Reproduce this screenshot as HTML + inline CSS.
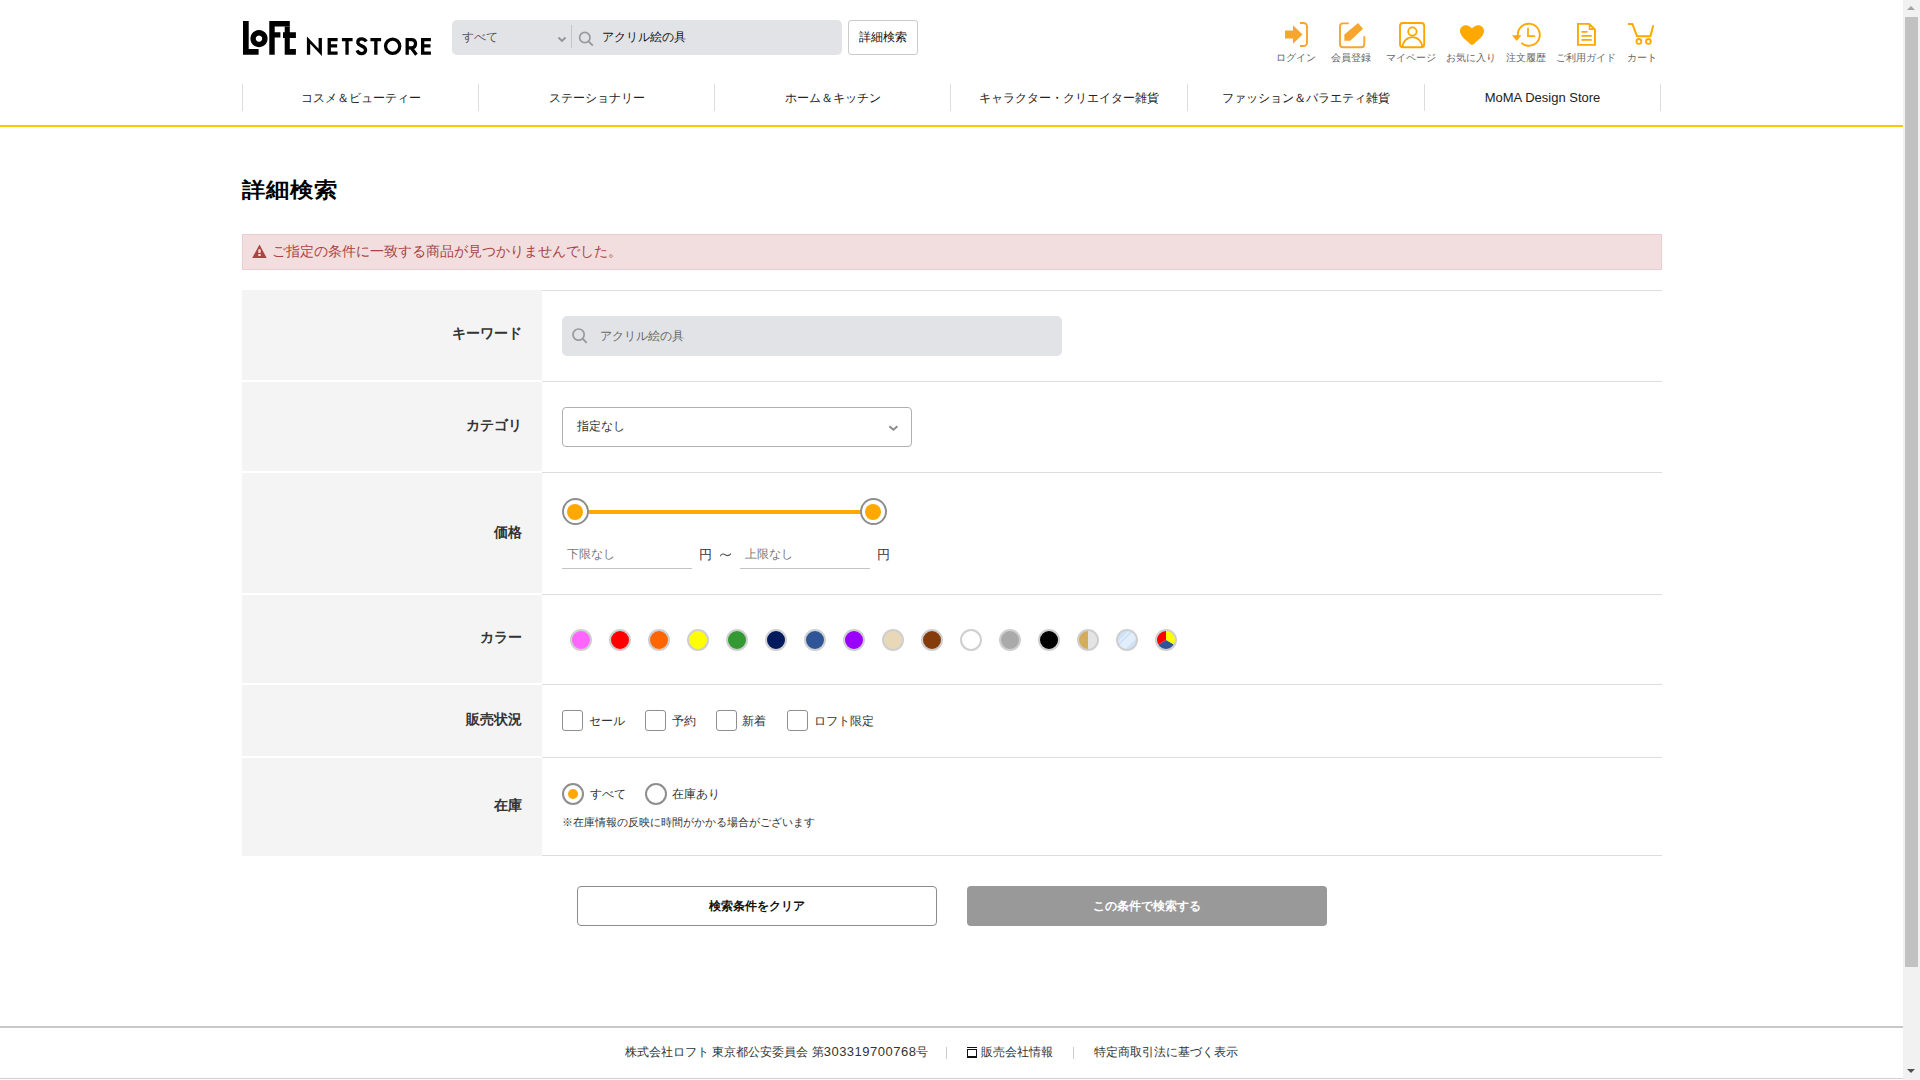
<!DOCTYPE html>
<html lang="ja"><head><meta charset="utf-8">
<style>
*{box-sizing:border-box;margin:0;padding:0}
html,body{width:1920px;height:1080px;overflow:hidden;background:#fff}
body{font-family:"Liberation Sans",sans-serif;color:#333;position:relative}
.a{position:absolute;white-space:nowrap}
.sb{position:absolute;left:1903px;top:0;width:17px;height:1080px;background:#f1f1f1}
.thumb{position:absolute;left:2px;top:17px;width:13px;height:950px;background:#c1c1c1}
.ua{position:absolute;left:4px;top:6px;width:0;height:0;border-left:4.5px solid transparent;border-right:4.5px solid transparent;border-bottom:4.5px solid #a3a3a3}
.da{position:absolute;left:4px;top:1069px;width:0;height:0;border-left:4.5px solid transparent;border-right:4.5px solid transparent;border-top:4.5px solid #505050}
.search{left:452px;top:20px;width:390px;height:35px;background:#e2e3e7;border-radius:5px}
.detail{left:848px;top:20px;width:70px;height:35px;border:1px solid #ccc;border-radius:3px;font-size:12px;color:#111;line-height:33px;text-align:center}
.ic{position:absolute;top:50.5px;font-size:10px;color:#666;text-align:center;width:70px}
.nav{left:242px;top:80px;width:1420px;height:36px}
.nav div{position:absolute;top:4px;height:27px;border-left:1px solid #ddd;font-size:12px;line-height:29px;text-align:center;color:#222}
.yl{left:0;top:125px;width:1903px;height:2px;background:#fdc800}
h1{position:absolute;left:242px;top:175px;font-size:23px;letter-spacing:1px;font-weight:bold;color:#000;line-height:32px;transform:scaleY(0.9);transform-origin:0 4px}
.alert{left:242px;top:234px;width:1420px;height:36px;background:#f2dede;border:1px solid #ebccd1;color:#a94442;font-size:14px;line-height:34px}
.th{position:absolute;left:242px;width:300px;background:#f4f4f4;font-size:14px;font-weight:bold;color:#333;text-align:right;padding-right:20px}
.tr{position:absolute;left:542px;width:1120px;border-top:1px solid #ddd}
.lbl{position:absolute;font-size:12px;color:#333}
.cb{position:absolute;width:21px;height:21px;border:1px solid #8f8f8f;border-radius:3px;background:#fff}
.col{position:absolute;top:629px;width:22px;height:22px;border-radius:50%;border:2px solid #cfcfcf}
</style></head><body>
<!-- scrollbar -->
<div class="sb"><div class="ua"></div><div class="thumb"></div><div class="da"></div></div>

<!-- header -->
<svg class="a" style="left:240px;top:18px" width="200" height="42" viewBox="240 18 200 42">
<g fill="#000">
<path d="M243 21.1h5.7v27.9h9.9v5.7h-15.6z"/>
<path d="M259 30a8.6 8.6 0 1 0 0.01 0zM259 35.4a3.2 3.2 0 1 1 -0.01 0z" fill-rule="evenodd"/>
<path d="M269.3 21.1h20.5v5.5h-15.1v5.7h5.7v5.2h-5.7v17.2h-5.4z"/>
<path d="M284.7 26.6h5.1v5.7h6.1v5.7h-6.1v11h6.1v5.7h-11.2v-16.7h-1.7v-5.7h1.7z"/>
</g>
<g fill="none" stroke="#000" stroke-width="3.3" stroke-linejoin="miter">
<path d="M337.6 39.65h-8.35v13.5h8.35M329.25 45.85h7.9"/>
<path d="M341.9 39.65h10.7M347.05 39.65v15.15"/>
<path d="M366.2 41.6C365.3 39.9 363.6 38.95 361.7 38.95 359.3 38.95 357.8 40.4 357.8 42.3 357.8 46.6 365.6 45.2 365.6 50 365.6 52.2 363.8 53.55 361.4 53.55 359.3 53.55 357.8 52.3 357.1 50.4"/>
<path d="M370.4 39.65h10.7M375.85 39.65v15.15"/>
<circle cx="392.65" cy="46.25" r="7.1"/>
<path d="M407.2 54.8V39.65h4.1c2.6 0 4.2 1.6 4.2 4.1 0 2.5-1.6 4.1-4.2 4.1h-4.1M411 47.6l5.4 7.2"/>
<path d="M430.9 39.65h-8.25v13.5h8.25M422.65 45.85h7.8"/>
</g>
<g fill="#000"><path d="M306.9 36.6L318.6 48.65V38H321.9V55.9L310.2 43.85V54.8H306.9z"/></g>
</svg>
<div class="a search"></div>
<div class="a" style="left:462px;top:29px;font-size:12px;color:#555;line-height:16px">すべて</div>
<svg class="a" style="left:556px;top:35px" width="12" height="8" viewBox="0 0 12 8"><path d="M2.5 2.5l3.5 3.5 3.5-3.5" fill="none" stroke="#939393" stroke-width="1.8"/></svg>
<div class="a" style="left:571px;top:25px;width:1px;height:23px;background:#c4c5c9"></div>
<svg class="a" style="left:577px;top:29.5px" width="18" height="18" viewBox="0 0 18 18"><circle cx="7.8" cy="7.5" r="5.2" fill="none" stroke="#9a9a9a" stroke-width="1.7"/><path d="M11.6 11.3l4.2 4.3" stroke="#9a9a9a" stroke-width="1.9"/></svg>
<div class="a" style="left:602px;top:29px;font-size:12px;color:#111;line-height:16px">アクリル絵の具</div>
<div class="a detail">詳細検索</div>
<svg class="a" style="left:1270px;top:15px" width="400" height="40" viewBox="1270 15 400 40">
<g fill="#f6a52d">
<path d="M1285 30.5h8v-5.3l9.5 9.3-9.5 9.3v-5.3h-8z"/>
</g>
<path d="M1300 23h3.5a3.5 3.5 0 0 1 3.5 3.5v16a3.5 3.5 0 0 1-3.5 3.5h-3.5" fill="none" stroke="#f6a52d" stroke-width="1.9"/>
<path d="M1348.8 23.4h-5.8a3 3 0 0 0-3 3v17.9a3 3 0 0 0 3 3h18.3a3 3 0 0 0 3-3v-8" fill="none" stroke="#f6a52d" stroke-width="1.9"/>
<path d="M1344.4 34.5l13.7-11.4 4.9 5.6-12.8 12h-5.8z" fill="#f6a52d"/>
<rect x="1400" y="23" width="24.2" height="24.2" rx="3" fill="none" stroke="#fca600" stroke-width="1.9"/>
<circle cx="1412.4" cy="31.5" r="4.2" fill="none" stroke="#fca600" stroke-width="1.8"/>
<path d="M1402.6 47a9.8 9.8 0 0 1 19.6 0" fill="none" stroke="#fca600" stroke-width="1.8"/>
<path d="M1472 44.8c-0.6 0-1.2-0.4-1.8-0.9C1466 40.4 1460 36 1460 31c0-3.3 2.6-5.8 5.8-5.8 2.6 0 4.6 1.4 6.2 3.4 1.6-2 3.6-3.4 6.2-3.4 3.2 0 5.8 2.5 5.8 5.8 0 5-6 9.4-10.2 12.9-0.6 0.5-1.2 0.9-1.8 0.9z" fill="#ffa800"/>
<path d="M1517.82 35.5A11 11 0 1 1 1521.9 43.3" fill="none" stroke="#ffa800" stroke-width="1.9" stroke-linecap="round"/>
<path d="M1512 35.2h9.4l-4.7 5.8z" fill="#ffa800"/>
<path d="M1528 28.4v7.8h6.4" fill="none" stroke="#ffa800" stroke-width="1.75" stroke-linecap="round"/>
<path d="M1577.95 23.85h11.2l5.8 5.6v15.4h-17z" fill="none" stroke="#ffa800" stroke-width="1.9"/>
<path d="M1589.6 23.85v5.3h5.35" fill="none" stroke="#ffa800" stroke-width="1.7"/>
<path d="M1582 31.8h5M1582 35.9h9.1M1582 39.9h9.1" stroke="#ffa800" stroke-width="1.65" stroke-linecap="round"/>
<path d="M1628 24h4.4l4.7 12.3h13.3l2.9-11" fill="none" stroke="#ffa800" stroke-width="2" stroke-linejoin="round"/>
<circle cx="1638.9" cy="41.4" r="2.4" fill="none" stroke="#ffa800" stroke-width="1.8"/>
<circle cx="1648.4" cy="41.4" r="2.4" fill="none" stroke="#ffa800" stroke-width="1.8"/>
</svg>
<div class="ic" style="left:1261px">ログイン</div>
<div class="ic" style="left:1316px">会員登録</div>
<div class="ic" style="left:1376px">マイページ</div>
<div class="ic" style="left:1436px">お気に入り</div>
<div class="ic" style="left:1491px">注文履歴</div>
<div class="ic" style="left:1551px">ご利用ガイド</div>
<div class="ic" style="left:1607px">カート</div>


<div class="a nav">
  <div style="left:0;width:237px">コスメ＆ビューティー</div>
  <div style="left:236px;width:237px">ステーショナリー</div>
  <div style="left:472px;width:237px">ホーム＆キッチン</div>
  <div style="left:708px;width:237px">キャラクター・クリエイター雑貨</div>
  <div style="left:945px;width:237px">ファッション＆バラエティ雑貨</div>
  <div style="left:1182px;width:237px;border-right:1px solid #ddd;font-size:13px;line-height:27px">MoMA Design Store</div>
</div>
<div class="a yl"></div>

<h1>詳細検索</h1>
<div class="a alert"></div>
<svg class="a" style="left:251px;top:244px" width="17" height="15" viewBox="0 0 17 15"><path d="M8.5 0.6L15.7 14H1.2z" fill="#a94442"/><rect x="7.3" y="5.3" width="2.4" height="3.6" fill="#f2dede"/><rect x="7.3" y="10" width="2.4" height="2" fill="#f2dede"/></svg>
<div class="a" style="left:272px;top:241.5px;font-size:14px;color:#a94442;line-height:18px">ご指定の条件に一致する商品が見つかりませんでした。</div>

<!-- table -->
<div class="th" style="top:290px;height:90px;line-height:86px">キーワード</div>
<div class="tr" style="top:290px;height:91px"></div>
<div class="th" style="top:382px;height:89px;line-height:87px">カテゴリ</div>
<div class="tr" style="top:381px;height:91px"></div>
<div class="th" style="top:473px;height:120px;line-height:118px">価格</div>
<div class="tr" style="top:472px;height:122px"></div>
<div class="th" style="top:595px;height:88px;line-height:85px">カラー</div>
<div class="tr" style="top:594px;height:90px"></div>
<div class="th" style="top:685px;height:71px;line-height:69px">販売状況</div>
<div class="tr" style="top:684px;height:73px"></div>
<div class="th" style="top:758px;height:98px;line-height:95px">在庫</div>
<div class="tr" style="top:757px;height:99px;border-bottom:1px solid #ddd"></div>


<!-- keyword -->
<div class="a" style="left:562px;top:316px;width:500px;height:40px;background:#e2e3e7;border-radius:5px"></div>
<svg class="a" style="left:570px;top:326px" width="20" height="20" viewBox="0 0 20 20"><circle cx="8.6" cy="8.6" r="5.6" fill="none" stroke="#999" stroke-width="1.7"/><path d="M12.6 12.6l4.1 4.2" stroke="#999" stroke-width="1.9"/></svg>
<div class="a" style="left:600px;top:328px;font-size:12px;color:#666;line-height:16px">アクリル絵の具</div>
<!-- category -->
<div class="a" style="left:562px;top:407px;width:350px;height:40px;border:1px solid #b0b0b0;border-radius:4px;background:#fff"></div>
<div class="a" style="left:577px;top:419px;font-size:12px;color:#333;line-height:15px">指定なし</div>
<svg class="a" style="left:887px;top:423px" width="12" height="10" viewBox="0 0 12 10"><path d="M2.4 3.2l4 3.6 4-3.6" fill="none" stroke="#8a8a8a" stroke-width="1.9"/></svg>
<!-- price -->
<div class="a" style="left:575px;top:510px;width:298px;height:3.5px;background:#ffa800"></div>
<div class="a" style="left:561.5px;top:498px;width:27px;height:27px;border-radius:50%;border:2px solid #8e8e8e;background:#fff"></div>
<div class="a" style="left:567px;top:503.5px;width:16px;height:16px;border-radius:50%;background:#ffa800"></div>
<div class="a" style="left:859.5px;top:498px;width:27px;height:27px;border-radius:50%;border:2px solid #8e8e8e;background:#fff"></div>
<div class="a" style="left:865px;top:503.5px;width:16px;height:16px;border-radius:50%;background:#ffa800"></div>
<div class="a" style="left:562px;top:568px;width:130px;height:1px;background:#c4c4c4"></div>
<div class="a" style="left:740px;top:568px;width:130px;height:1px;background:#c4c4c4"></div>
<div class="a" style="left:567px;top:546px;font-size:12px;color:#777;line-height:16px">下限なし</div>
<div class="a" style="left:745px;top:546px;font-size:12px;color:#777;line-height:16px">上限なし</div>
<div class="a" style="left:699px;top:547px;font-size:13px;color:#333;line-height:16px">円</div>
<svg class="a" style="left:719px;top:550.5px" width="14" height="8" viewBox="0 0 14 8"><path d="M1.2 5.2c1.5-2.4 3-2.8 5-1.4s3.6 1.3 5.8-1.2" fill="none" stroke="#555" stroke-width="1.05"/></svg>
<div class="a" style="left:877px;top:547px;font-size:13px;color:#333;line-height:16px">円</div>
<!-- colors -->
<div class="col" style="left:570px;background:#ff66ff"></div>
<div class="col" style="left:609px;background:#ff0000"></div>
<div class="col" style="left:648px;background:#ff6600"></div>
<div class="col" style="left:687px;background:#ffff00"></div>
<div class="col" style="left:726px;background:#339933"></div>
<div class="col" style="left:765px;background:#001a5e"></div>
<div class="col" style="left:804px;background:#2f5597"></div>
<div class="col" style="left:843px;background:#9900ff"></div>
<div class="col" style="left:882px;background:#e8d8b8"></div>
<div class="col" style="left:921px;background:#843c0c"></div>
<div class="col" style="left:960px;background:#fff"></div>
<div class="col" style="left:999px;background:#aaaaaa"></div>
<div class="col" style="left:1038px;background:#000"></div>
<div class="col" style="left:1077px;background:linear-gradient(90deg,#d4ad5c 50%,#e4e4e4 50%)"></div>
<div class="col" style="left:1116px;background:linear-gradient(135deg,#cfe2fa 0%,#cfe2fa 30%,#e3eefb 30%,#e3eefb 36%,#cfe2fa 36%,#cfe2fa 42%,#e3eefb 42%,#e3eefb 70%,#cfe2fa 70%)"></div>
<svg class="a" style="left:1155px;top:629px" width="22" height="22" viewBox="0 0 22 22"><path d="M11 11V1.6A9.4 9.4 0 0 1 19.14 15.7z" fill="#ffff00"/><path d="M11 11L19.14 15.7A9.4 9.4 0 0 1 2.86 15.7z" fill="#2f5597"/><path d="M11 11L2.86 15.7A9.4 9.4 0 0 1 11 1.6z" fill="#ff0000"/><circle cx="11" cy="11" r="10" fill="none" stroke="#cfcfcf" stroke-width="2"/></svg>
<!-- checkboxes -->
<div class="cb" style="left:562px;top:710px"></div><div class="lbl" style="left:589px;top:713px;line-height:16px">セール</div>
<div class="cb" style="left:645px;top:710px"></div><div class="lbl" style="left:672px;top:713px;line-height:16px">予約</div>
<div class="cb" style="left:716px;top:710px"></div><div class="lbl" style="left:742px;top:713px;line-height:16px">新着</div>
<div class="cb" style="left:787px;top:710px"></div><div class="lbl" style="left:814px;top:713px;line-height:16px">ロフト限定</div>
<!-- stock -->
<div class="a" style="left:562px;top:783px;width:22px;height:22px;border-radius:50%;border:2px solid #8e8e8e;background:#fff"></div>
<div class="a" style="left:568px;top:789px;width:10px;height:10px;border-radius:50%;background:#ffa800"></div>
<div class="lbl" style="left:590px;top:786px;line-height:16px">すべて</div>
<div class="a" style="left:645px;top:783px;width:22px;height:22px;border-radius:50%;border:2px solid #8e8e8e;background:#fff"></div>
<div class="lbl" style="left:672px;top:786px;line-height:16px">在庫あり</div>
<div class="a" style="left:562px;top:815px;font-size:11px;color:#333;line-height:14px">※在庫情報の反映に時間がかかる場合がございます</div>
<!-- buttons -->
<div class="a" style="left:577px;top:886px;width:360px;height:40px;border:1px solid #8c8c8c;border-radius:4px;background:#fff;font-size:12px;font-weight:bold;color:#111;text-align:center;line-height:38px">検索条件をクリア</div>
<div class="a" style="left:967px;top:886px;width:360px;height:40px;border-radius:4px;background:#999;font-size:12px;font-weight:bold;color:#fff;text-align:center;line-height:40px">この条件で検索する</div>
<!-- footer -->
<div class="a" style="left:0;top:1026px;width:1903px;height:2px;background:#c8c8c8"></div>
<div class="a" style="left:625px;top:1044px;font-size:12px;color:#333;line-height:16px">株式会社ロフト 東京都公安委員会 第<span style="font-size:13px;letter-spacing:0.5px">303319700768</span>号</div>
<div class="a" style="left:946px;top:1047px;width:1px;height:12px;background:#ccc"></div>
<div class="a" style="left:967px;top:1047px;width:10px;height:1px;background:#111"></div>
<div class="a" style="left:967px;top:1049px;width:10px;height:9px;border:1.5px solid #111;border-bottom-width:2px"></div>
<div class="a" style="left:981px;top:1044px;font-size:12px;color:#333;line-height:16px">販売会社情報</div>
<div class="a" style="left:1073px;top:1047px;width:1px;height:12px;background:#ccc"></div>
<div class="a" style="left:1094px;top:1044px;font-size:12px;color:#333;line-height:16px">特定商取引法に基づく表示</div>
<div class="a" style="left:0;top:1078px;width:1903px;height:1px;background:#cfcfcf"></div>
</body></html>
